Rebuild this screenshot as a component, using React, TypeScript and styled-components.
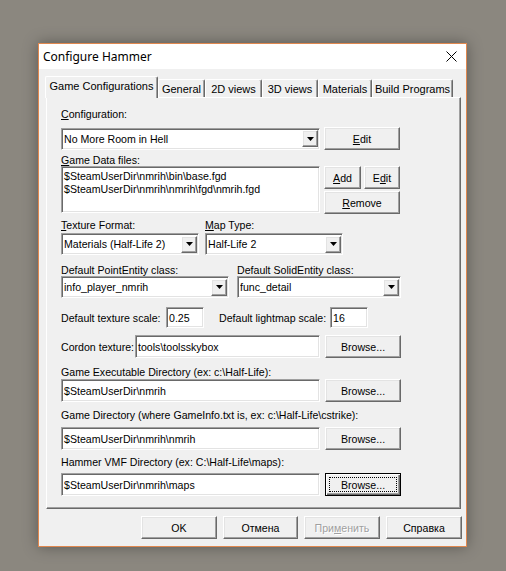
import React from "react";
import styled, { createGlobalStyle } from "styled-components";

const GlobalStyle = createGlobalStyle`
  html, body { margin: 0; padding: 0; }
  body { background: #8b877f; font-family: "Liberation Sans", Arial, sans-serif; }
  * { box-sizing: border-box; }
`;

const FS = "10.6px";

const Page = styled.div`
  width: 506px;
  height: 571px;
  overflow: hidden;
  padding: 43px 0 0 38px;
  background: #8b877f;
`;

const Window = styled.div`
  width: 429px;
  height: 504px;
  border: 1px solid #e0884f;
  background: #f0f0f0;
  box-shadow: 0 0 14px rgba(0, 0, 0, 0.35);
  display: flex;
  flex-direction: column;
`;

const TitleBar = styled.div`
  height: 25px;
  background: #fff;
  display: flex;
  align-items: center;
  justify-content: space-between;
  padding: 0 9px 0 4px;
  font-family: "Segoe UI", "Noto Sans", sans-serif;
  font-size: 12px;
  color: #000;
`;

const Body = styled.div`
  flex: 1;
  display: flex;
  flex-direction: column;
  padding: 7px 5px 7px 7px;
`;

const TabStrip = styled.div`
  height: 21px;
  display: flex;
  align-items: flex-end;
  margin-left: -1px;
`;

const Tab = styled.div<{ $w: number; $active?: boolean }>`
  width: ${(p) => p.$w}px;
  height: ${(p) => (p.$active ? 22 : 18)}px;
  margin-bottom: ${(p) => (p.$active ? -1 : 0)}px;
  position: relative;
  z-index: ${(p) => (p.$active ? 2 : 1)};
  background: #f0f0f0;
  border-top: 1px solid #fff;
  border-left: 1px solid #fff;
  border-right: 1px solid #696969;
  box-shadow: inset -1px 0 #a0a0a0;
  border-radius: 2px 2px 0 0;
  display: flex;
  align-items: ${(p) => (p.$active ? "flex-start" : "center")};
  padding-top: ${(p) => (p.$active ? 3 : 0)}px;
  justify-content: center;
  font-family: "Liberation Sans", Arial, sans-serif;
  font-size: 11px;
  color: #000;
  white-space: nowrap;
`;

const Panel = styled.div`
  height: 412px;
  border-top: 1px solid #fff;
  border-left: 1px solid #fff;
  border-right: 1px solid #696969;
  border-bottom: 1px solid #696969;
  box-shadow: inset -1px -1px #a0a0a0;
  padding: 10px 0 0 14px;
  display: flex;
  flex-direction: column;
  font-size: ${FS};
  color: #000;
`;

const Row = styled.div<{ $mt?: number; $h?: number; $align?: string }>`
  display: flex;
  align-items: ${(p) => p.$align ?? "center"};
  margin-top: ${(p) => p.$mt ?? 0}px;
  height: ${(p) => (p.$h ? `${p.$h}px` : "auto")};
`;

const Label = styled.div<{ $mt?: number; $w?: number }>`
  font-size: ${FS};
  line-height: 12px;
  height: 12px;
  margin-top: ${(p) => p.$mt ?? 0}px;
  width: ${(p) => (p.$w ? `${p.$w}px` : "auto")};
  flex-shrink: 0;
  white-space: nowrap;
`;

const InlineLabel = styled.div<{ $w: number; $ml?: number }>`
  width: ${(p) => p.$w}px;
  margin-left: ${(p) => p.$ml ?? 0}px;
  flex-shrink: 0;
  font-size: ${FS};
  white-space: nowrap;
`;

const U = styled.span`
  text-decoration: underline;
  text-underline-offset: 1px;
`;

const Sunken = styled.div<{ $w: number; $h: number; $ml?: number }>`
  width: ${(p) => p.$w}px;
  height: ${(p) => p.$h}px;
  margin-left: ${(p) => p.$ml ?? 0}px;
  flex-shrink: 0;
  background: #fff;
  border: 1px solid;
  border-color: #a0a0a0 #fff #fff #a0a0a0;
  box-shadow: inset 1px 1px #696969, inset -1px -1px #e3e3e3;
  display: flex;
  align-items: center;
  padding: 0 2px 0 2px;
  font-size: ${FS};
  white-space: nowrap;
  overflow: hidden;
`;

const ListBox = styled(Sunken)`
  flex-direction: column;
  align-items: flex-start;
  padding: 3px 2px 0 2px;
  line-height: 13px;
`;

const ComboText = styled.span`
  flex: 1;
  overflow: hidden;
`;

const DropBtn = styled.div`
  width: 16px;
  height: calc(100% - 3px);
  margin-right: -1px;
  background: #f0f0f0;
  border: 1px solid;
  border-color: #fff #696969 #696969 #fff;
  box-shadow: inset -1px -1px #a0a0a0, inset 1px 1px #e3e3e3;
  display: flex;
  align-items: center;
  justify-content: center;
`;

const Btn = styled.div<{ $w: number; $ml?: number; $disabled?: boolean; $focus?: boolean }>`
  width: ${(p) => p.$w}px;
  height: 23px;
  margin-left: ${(p) => p.$ml ?? 0}px;
  flex-shrink: 0;
  background: #f0f0f0;
  border: 1px solid;
  border-color: ${(p) => (p.$focus ? "#000" : "#fff #696969 #696969 #fff")};
  box-shadow: ${(p) =>
    p.$focus
      ? "inset 1px 1px #fff, inset -1px -1px #696969, inset -2px -2px #a0a0a0"
      : "inset -1px -1px #a0a0a0, inset 1px 1px #e3e3e3"};
  display: flex;
  align-items: center;
  justify-content: center;
  font-size: ${FS};
  color: ${(p) => (p.$disabled ? "#a0a0a0" : "#000")};
  text-shadow: ${(p) => (p.$disabled ? "1px 1px #fff" : "none")};
  padding: ${(p) => (p.$focus ? "3px" : "0")};
  white-space: nowrap;
`;

const FocusRect = styled.div`
  width: 100%;
  height: 100%;
  border: 1px dotted #000;
  display: flex;
  align-items: center;
  justify-content: center;
`;

const BtnCol = styled.div`
  display: flex;
  flex-direction: column;
  gap: 2px;
  margin-left: 4px;
`;

const BtnPair = styled.div`
  display: flex;
  gap: 3px;
`;

const Footer = styled.div`
  display: flex;
  justify-content: flex-end;
  gap: 6px;
  margin-top: 7px;
  margin-right: -1px;
`;

const Arrow = () => (
  <svg width="7" height="4" viewBox="0 0 7 4">
    <polygon points="0,0 7,0 3.5,4" fill="#000" />
  </svg>
);

const CloseIcon = () => (
  <svg width="11" height="11" viewBox="0 0 11 11">
    <path d="M0.5 0.5 L10.5 10.5 M10.5 0.5 L0.5 10.5" stroke="#000" strokeWidth="1" />
  </svg>
);

const Combo = ({ w, text, ml }: { w: number; text: string; ml?: number }) => (
  <Sunken $w={w} $h={22} $ml={ml}>
    <ComboText>{text}</ComboText>
    <DropBtn>
      <Arrow />
    </DropBtn>
  </Sunken>
);

export default function App() {
  return (
    <>
      <GlobalStyle />
      <Page>
        <Window>
          <TitleBar>
            <span>Configure Hammer</span>
            <CloseIcon />
          </TitleBar>
          <Body>
            <TabStrip>
              <Tab $w={113} $active>Game Configurations</Tab>
              <Tab $w={47}>General</Tab>
              <Tab $w={57}>2D views</Tab>
              <Tab $w={56}>3D views</Tab>
              <Tab $w={54}>Materials</Tab>
              <Tab $w={81}>Build Programs</Tab>
            </TabStrip>
            <Panel>
              <Label>
                <U>C</U>onfiguration:
              </Label>
              <Row $mt={7} $h={23}>
                <Combo w={259} text="No More Room in Hell" />
                <Btn $w={76} $ml={4}>
                  <span>
                    <U>E</U>dit
                  </span>
                </Btn>
              </Row>
              <Label $mt={4}>
                <U>G</U>ame Data files:
              </Label>
              <Row $align="flex-start">
                <ListBox $w={259} $h={47}>
                  <div>$SteamUserDir\nmrih\bin\base.fgd</div>
                  <div>$SteamUserDir\nmrih\nmrih\fgd\nmrih.fgd</div>
                </ListBox>
                <BtnCol>
                  <BtnPair>
                    <Btn $w={37}>
                      <span>
                        <U>A</U>dd
                      </span>
                    </Btn>
                    <Btn $w={36}>
                      <span>
                        E<U>d</U>it
                      </span>
                    </Btn>
                  </BtnPair>
                  <Btn $w={76}>
                    <span>
                      <U>R</U>emove
                    </span>
                  </Btn>
                </BtnCol>
              </Row>
              <Row $mt={5}>
                <Label $w={144}>
                  <U>T</U>exture Format:
                </Label>
                <Label>
                  <U>M</U>ap Type:
                </Label>
              </Row>
              <Row $mt={2}>
                <Combo w={138} text="Materials (Half-Life 2)" />
                <Combo w={138} ml={6} text="Half-Life 2" />
              </Row>
              <Row $mt={9}>
                <Label $w={176}>Default PointEntity class:</Label>
                <Label>Default SolidEntity class:</Label>
              </Row>
              <Row>
                <Combo w={168} text="info_player_nmrih" />
                <Combo w={164} ml={8} text="func_detail" />
              </Row>
              <Row $mt={9}>
                <InlineLabel $w={105}>Default texture scale:</InlineLabel>
                <Sunken $w={38} $h={21}>0.25</Sunken>
                <InlineLabel $w={111} $ml={15}>Default lightmap scale:</InlineLabel>
                <Sunken $w={38} $h={21}>16</Sunken>
              </Row>
              <Row $mt={7}>
                <InlineLabel $w={74}>Cordon texture:</InlineLabel>
                <Sunken $w={185} $h={23}>tools\toolsskybox</Sunken>
                <Btn $w={76} $ml={5}>Browse...</Btn>
              </Row>
              <Label $mt={8}>Game Executable Directory (ex: c:\Half-Life):</Label>
              <Row $mt={1}>
                <Sunken $w={259} $h={23}>$SteamUserDir\nmrih</Sunken>
                <Btn $w={76} $ml={5}>Browse...</Btn>
              </Row>
              <Label $mt={7}>Game Directory (where GameInfo.txt is, ex: c:\Half-Life\cstrike):</Label>
              <Row $mt={6}>
                <Sunken $w={259} $h={23}>$SteamUserDir\nmrih\nmrih</Sunken>
                <Btn $w={76} $ml={5}>Browse...</Btn>
              </Row>
              <Label $mt={6}>Hammer VMF Directory (ex: C:\Half-Life\maps):</Label>
              <Row $mt={5}>
                <Sunken $w={259} $h={23}>$SteamUserDir\nmrih\maps</Sunken>
                <Btn $w={76} $ml={5} $focus>
                  <FocusRect>Browse...</FocusRect>
                </Btn>
              </Row>
            </Panel>
            <Footer>
              <Btn $w={76}>OK</Btn>
              <Btn $w={75}>Отмена</Btn>
              <Btn $w={76} $disabled>
                <span>
                  При<U>м</U>енить
                </span>
              </Btn>
              <Btn $w={76}>Справка</Btn>
            </Footer>
          </Body>
        </Window>
      </Page>
    </>
  );
}
